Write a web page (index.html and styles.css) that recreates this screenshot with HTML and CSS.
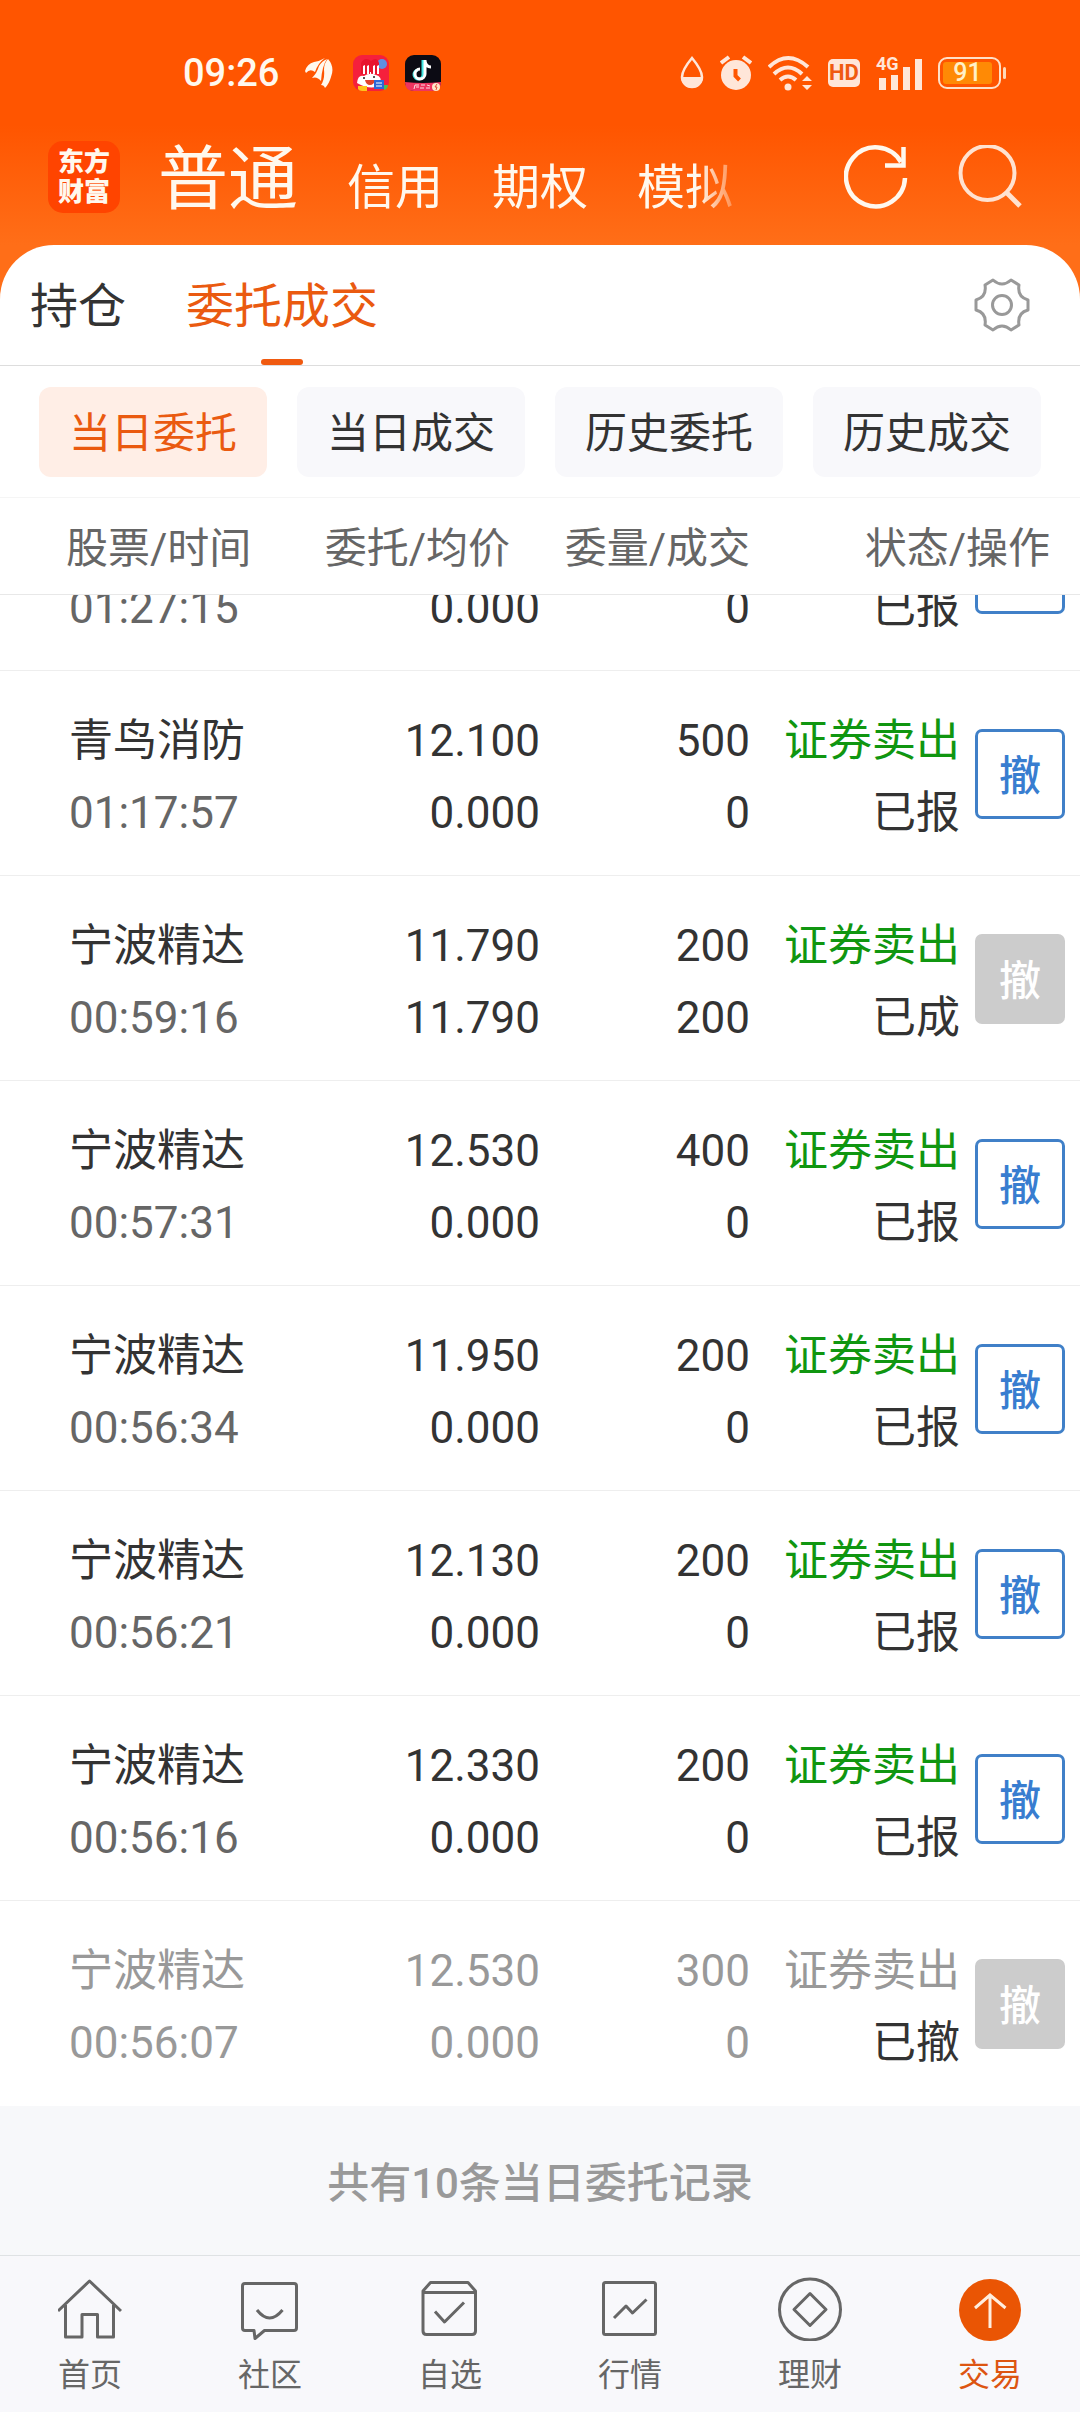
FILE: index.html
```html
<!DOCTYPE html>
<html lang="zh-CN">
<head>
<meta charset="utf-8">
<meta name="viewport" content="width=device-width, initial-scale=1">
<title>委托成交</title>
<link rel="stylesheet" href="styles.css">
</head>
<body>
<div class="app">
  <header class="top">
    <div class="status-bar">
      <div class="status-left">
        <span class="clock">09:26</span>
        <svg class="ico-brand" width="28" height="32" viewBox="0 0 28 32" aria-hidden="true">
          <path d="M0 14Q2 7 9 5Q15 4 20 1Q13 6 10 15Q5 11 1 16ZM7 21Q12 16 14 9Q17 4 22 2Q17 9 16 24Q12 19 7 21ZM16 28Q20 22 19 13Q19 6 23 2Q30 10 26 20Q24 27 20 31Q19 28 16 28Z" fill="#fff8ee"/>
        </svg>
        <svg class="ico-app" width="36" height="36" viewBox="0 0 36 36" aria-hidden="true">
          <rect width="36" height="36" rx="9" fill="#f5203c"/>
          <circle cx="29" cy="9" r="5" fill="#5d8fe0"/>
          <path d="M8 19V8Q12 1 18 6Q24 1 26 8V19Z" fill="#e8142e"/>
          <path d="M10 11l2-1v9h-2zM14 11l2-1v9h-2zM17 17h1v2h-1zM20 11l2-1v9h-2zM24 11l2-1v9h-2z" fill="#fff"/>
          <path d="M4 28Q5 19 11 21Q17 17 23 20Q29 21 28 30Q18 36 4 28Z" fill="#fff"/>
          <path d="M12 25h10q-1 5-5 5t-5-5z" fill="#e0402c"/>
          <circle cx="11" cy="23" r="1" fill="#222"/><circle cx="21" cy="22" r="1" fill="#222"/>
          <path d="M5 31h9v5H9q-3 0-4-2z" fill="#ffc21c"/>
          <rect x="21" y="25" width="10" height="9" fill="#2c66d8"/>
          <path d="M23 28h6M23 31h6" stroke="#fff"/>
          <path d="M31 30h4q0 4-4 5z" fill="#4fbf52"/>
        </svg>
        <svg class="ico-app" width="36" height="36" viewBox="0 0 36 36" aria-hidden="true">
          <rect width="36" height="36" rx="9" fill="#0c0b14"/>
          <path d="M18 5v14a4.500 4.500 0 1 1-5-4" fill="none" stroke="#3fe5e2" stroke-width="3"/>
          <path d="M20 5v14a5 5 0 1 1-5-5M20 6q1 6 6 6" fill="none" stroke="#fff" stroke-width="3"/>
          <path d="M0 27Q18 29 36 27Q36 36 27 36H9Q0 36 0 27Z" fill="#ef3460"/>
          <path d="M9 34l1-4h4M11 32h3M16 30h4M15 33h4M22 30l3 1M21 33h4" stroke="#ffdbe2" fill="none"/>
          <circle cx="31" cy="32" r="4" fill="#ffe7c8"/><path d="M32 29l-2 3h2l-1 3" stroke="#e34b38" fill="none"/>
        </svg>
      </div>
      <div class="status-right">
        <svg width="24" height="36" viewBox="0 0 24 36" aria-hidden="true">
          <path d="M12 3Q2 15 2 22a10 10 0 0 0 20 0Q22 15 12 3Z" fill="none" stroke="#ffe6d9" stroke-width="2.500"/>
          <path d="M1 22h22a11 11 0 0 1-22 0Z" fill="#ffe6d9"/>
        </svg>
        <svg width="32" height="36" viewBox="0 0 32 36" aria-hidden="true">
          <circle cx="16" cy="20" r="15" fill="#ffe6d9"/>
          <path d="M1 8l8-6M31 8l-8-6" stroke="#ffe6d9" stroke-width="4"/>
          <path d="M15.500 14v7l4 4" fill="none" stroke="#ff5500" stroke-width="4"/>
        </svg>
        <svg width="44" height="36" viewBox="0 0 44 36" aria-hidden="true">
          <path d="M1 12Q20 -6 40 12M6 19Q20 6 34 19M12 25Q20 18 28 25" fill="none" stroke="#ffe6d9" stroke-width="4"/>
          <circle cx="20" cy="32" r="3.500" fill="#ffe6d9"/>
          <path d="M34 26l5-5 5 5zM34 30l5 5 5-5z" fill="#ffe6d9"/>
        </svg>
        <span class="hd">HD</span>
        <span class="signal">
          <svg width="46" height="34" viewBox="0 0 46 34" aria-hidden="true">
            <path d="M3 22h7v12H3zM15 19h7v15h-7zM27 11h7v23h-7zM39 3h7v31h-7z" fill="#ffe6d9"/>
          </svg>
          <span class="net">4G</span>
        </span>
        <span class="battery"><span class="level">91</span></span>
      </div>
    </div>
    <div class="toolbar">
      <a class="logo" href="#home">东方<br>财富</a>
      <nav class="accounts" aria-label="账户">
        <a class="account current" href="#normal">普通</a>
        <a class="account" href="#credit">信用</a>
        <a class="account" href="#option">期权</a>
        <a class="account" href="#demo">模拟</a>
      </nav>
      <div class="tools">
        <button class="tool" type="button" aria-label="刷新">
          <svg width="64" height="64" viewBox="0 0 64 64"><path d="M61 33A29.500 29.500 0 1 1 57 17" fill="none" stroke="#fff8ee" stroke-width="4.500"/><path d="M59.500 2V20.500H41" fill="none" stroke="#fff8ee" stroke-width="4.500"/></svg>
        </button>
        <button class="tool" type="button" aria-label="搜索">
          <svg width="64" height="64" viewBox="0 0 64 64"><circle cx="29.500" cy="28" r="27" fill="none" stroke="#ffe2d0" stroke-width="4"/><path d="M48 47l14 14" stroke="#ffe2d0" stroke-width="5"/></svg>
        </button>
      </div>
    </div>
  </header>

  <main class="sheet">
    <div class="tabs">
      <a class="tab" href="#positions">持仓</a>
      <a class="tab active" href="#orders">委托成交</a>
      <button class="settings" type="button" aria-label="设置">
        <svg width="56" height="56" viewBox="0 0 56 56"><path d="M19 3Q28 11 37 3L45 8Q43 20 54 23V33Q43 36 45 48L37 53Q28 45 19 53L11 48Q13 36 2 33V23Q13 20 11 8Z" fill="none" stroke="#999" stroke-width="3" stroke-linejoin="round"/><circle cx="28" cy="28" r="9.500" fill="none" stroke="#999" stroke-width="3"/></svg>
      </button>
    </div>
    <div class="filters">
      <button class="chip selected" type="button">当日委托</button>
      <button class="chip" type="button">当日成交</button>
      <button class="chip" type="button">历史委托</button>
      <button class="chip" type="button">历史成交</button>
    </div>
    <div class="scroller">
      <div class="list">
        <table class="orders">
          <colgroup><col><col class="c-price"><col class="c-qty"><col class="c-state"><col class="c-act"></colgroup>
          <thead>
            <tr><th class="name">股票/时间</th><th class="price">委托/均价</th><th>委量/成交</th><th class="state" colspan="2">状态/操作</th></tr>
          </thead>
          <tbody>
            <tr>
              <td class="name"><span class="time">01:27:15</span></td>
              <td><span>0.000</span></td><td><span>0</span></td><td><span>已报</span></td>
              <td class="act"><button class="cancel" type="button" aria-label="撤"></button></td>
            </tr>
            <tr>
              <td class="name"><span>青鸟消防</span><span class="time">01:17:57</span></td>
              <td><span>12.100</span><span>0.000</span></td><td><span>500</span><span>0</span></td>
              <td><span class="sell">证券卖出</span><span>已报</span></td>
              <td class="act"><button class="cancel" type="button">撤</button></td>
            </tr>
            <tr>
              <td class="name"><span>宁波精达</span><span class="time">00:59:16</span></td>
              <td><span>11.790</span><span>11.790</span></td><td><span>200</span><span>200</span></td>
              <td><span class="sell">证券卖出</span><span>已成</span></td>
              <td class="act"><button class="cancel" type="button" disabled>撤</button></td>
            </tr>
            <tr>
              <td class="name"><span>宁波精达</span><span class="time">00:57:31</span></td>
              <td><span>12.530</span><span>0.000</span></td><td><span>400</span><span>0</span></td>
              <td><span class="sell">证券卖出</span><span>已报</span></td>
              <td class="act"><button class="cancel" type="button">撤</button></td>
            </tr>
            <tr>
              <td class="name"><span>宁波精达</span><span class="time">00:56:34</span></td>
              <td><span>11.950</span><span>0.000</span></td><td><span>200</span><span>0</span></td>
              <td><span class="sell">证券卖出</span><span>已报</span></td>
              <td class="act"><button class="cancel" type="button">撤</button></td>
            </tr>
            <tr>
              <td class="name"><span>宁波精达</span><span class="time">00:56:21</span></td>
              <td><span>12.130</span><span>0.000</span></td><td><span>200</span><span>0</span></td>
              <td><span class="sell">证券卖出</span><span>已报</span></td>
              <td class="act"><button class="cancel" type="button">撤</button></td>
            </tr>
            <tr>
              <td class="name"><span>宁波精达</span><span class="time">00:56:16</span></td>
              <td><span>12.330</span><span>0.000</span></td><td><span>200</span><span>0</span></td>
              <td><span class="sell">证券卖出</span><span>已报</span></td>
              <td class="act"><button class="cancel" type="button">撤</button></td>
            </tr>
            <tr class="void">
              <td class="name"><span>宁波精达</span><span class="time">00:56:07</span></td>
              <td><span>12.530</span><span>0.000</span></td><td><span>300</span><span>0</span></td>
              <td><span class="sell">证券卖出</span><span class="result">已撤</span></td>
              <td class="act"><button class="cancel" type="button" disabled>撤</button></td>
            </tr>
          </tbody>
        </table>
        <p class="total">共有10条当日委托记录</p>
      </div>
    </div>
  </main>

  <nav class="bottom-nav" aria-label="主导航">
    <a class="nav-item" href="#home">
      <svg class="nav-icon" viewBox="0 0 64 64"><path d="M0 34L31.500 4L63 34M7.500 28V60H24V37.500H39.500V60H55.500V28"/></svg>首页</a>
    <a class="nav-item" href="#community">
      <svg class="nav-icon" viewBox="0 0 64 64"><path d="M7 6.500H56Q58.500 6.500 58.500 9V51Q58.500 53.500 56 53.500H26.500L17 61.500L16 53.500H7Q4.500 53.500 4.500 51V9Q4.500 6.500 7 6.500ZM19 33Q31.500 49 44.500 33"/></svg>社区</a>
    <a class="nav-item" href="#watchlist">
      <svg class="nav-icon" viewBox="0 0 64 64"><path d="M5 14L12.500 5.500H50L57.500 14V54Q57.500 57.500 54 57.500H8.500Q5 57.500 5 54ZM5 15.500H57.500M17 34.500L26.500 45L46 25.500"/></svg>自选</a>
    <a class="nav-item" href="#market">
      <svg class="nav-icon" viewBox="0 0 64 64"><rect x="5.500" y="5.500" width="52" height="52" rx="2"/><path d="M16 41L28 29L34.500 36L48.500 22.500"/></svg>行情</a>
    <a class="nav-item" href="#wealth">
      <svg class="nav-icon" viewBox="0 0 64 64"><circle cx="32" cy="32.500" r="30.500"/><path d="M32 16.500L48 32.500L32 48.500L16 32.500Z"/></svg>理财</a>
    <a class="nav-item active" href="#trade">
      <svg class="nav-icon" viewBox="0 0 64 64"><circle class="disc" cx="32" cy="33" r="31"/><path class="arrow" d="M32 51V18M17 31L32 18L47.500 31"/></svg>交易</a>
  </nav>
</div>
</body>
</html>
```
FILE: styles.css
```css
* {
  box-sizing: border-box;
}

body {
  margin: 0;
  color: #333;
  background: #f8f8fb;
  font-family: Roboto, "Noto Sans CJK SC", sans-serif;
}

a {
  color: inherit;
  text-decoration: none;
}

button {
  padding: 0;
  border: 0;
  background: none;
  color: inherit;
  font: inherit;
}

svg {
  display: block;
}

.app {
  display: flex;
  flex-direction: column;
  height: 100vh;
  background: linear-gradient(#ff5500 125px, #ff6e18 245px);
}

.top {
  flex: none;
}

/* Status bar */
.status-bar {
  display: flex;
  align-items: center;
  justify-content: space-between;
  height: 94px;
  padding: 52px 74px 0 183px;
}

.status-left,
.status-right {
  display: flex;
  align-items: center;
}

.clock {
  color: #fff8ee;
  font-size: 38px;
  font-weight: 500;
  line-height: 42px;
}

.ico-brand {
  margin-left: 26px;
}

.ico-app {
  margin-left: 16px;
}

.ico-brand + .ico-app {
  margin-left: 20px;
}

.status-right {
  gap: 16px;
}

.hd {
  width: 32px;
  border-radius: 5px;
  background: #ffe6d9;
  color: #f05a10;
  font-size: 22px;
  font-weight: 700;
  line-height: 28px;
  text-align: center;
}

.signal {
  position: relative;
}

.net {
  position: absolute;
  top: -2px;
  left: 0;
  color: #ffe6d9;
  font-size: 18px;
  font-weight: 700;
  line-height: 20px;
}

.battery {
  position: relative;
  width: 63px;
  height: 32px;
  margin-right: 5px;
  padding: 3px;
  border: 2px solid #ffe0c8;
  border-radius: 9px;
}

.battery::after {
  content: "";
  position: absolute;
  top: 8px;
  right: -7px;
  width: 3px;
  height: 12px;
  border-radius: 2px;
  background: #ffd9b8;
}

.level {
  display: block;
  width: 49px;
  border-radius: 3px;
  background: #ff8a05;
  color: #fff0c8;
  font-size: 25px;
  font-weight: 500;
  line-height: 22px;
  text-align: center;
}

/* Account switcher */
.toolbar {
  display: flex;
  align-items: center;
  height: 151px;
  padding: 15px 58px 0 48px;
}

.logo {
  flex: none;
  width: 72px;
  padding: 6px 0;
  border-radius: 15px;
  background: #ff4400;
  color: #fff8ee;
  font-size: 26px;
  font-weight: 900;
  line-height: 30px;
  text-align: center;
}

.accounts {
  display: flex;
  align-items: baseline;
  gap: 49px;
  margin-left: 38px;
  padding-top: 14px;
  color: #fff8ee;
  -webkit-mask-image: linear-gradient(to right, #000 540px, transparent 590px);
  mask-image: linear-gradient(to right, #000 540px, transparent 590px);
}

.account {
  font-size: 48px;
  line-height: 80px;
  white-space: nowrap;
}

.account.current {
  font-size: 70px;
}

.tools {
  display: flex;
  gap: 50px;
  margin-left: auto;
}

/* Sheet */
.sheet {
  display: flex;
  flex: 1;
  flex-direction: column;
  min-height: 0;
  border-radius: 54px 54px 0 0;
  background: #fff;
}

.tabs {
  display: flex;
  align-items: center;
  gap: 60px;
  padding: 0 50px 0 30px;
  border-bottom: 1px solid #ddd;
}

.tab {
  position: relative;
  padding-top: 4px;
  font-size: 48px;
  line-height: 116px;
}

.tab.active {
  color: #ea5a10;
}

.tab.active::after {
  content: "";
  position: absolute;
  bottom: 0;
  left: calc(50% - 21px);
  width: 42px;
  height: 6px;
  border-radius: 3px;
  background: #f05a10;
}

.settings {
  margin-left: auto;
}

.filters {
  display: grid;
  grid-template-columns: repeat(4, 1fr);
  gap: 30px;
  padding: 21px 39px 20px;
  border-bottom: 1px solid #f5f5f5;
}

.chip {
  padding-top: 4px;
  border-radius: 12px;
  background: #f8f8fb;
  font-size: 42px;
  line-height: 86px;
}

.chip.selected {
  background: #ffeee6;
  color: #ea5a10;
}

/* The list opens scrolled to its last record */
.scroller {
  display: flex;
  flex: 1;
  flex-direction: column-reverse;
  min-height: 0;
  overflow-y: auto;
  scrollbar-width: none;
}

.list {
  flex: none;
}

.orders {
  width: 100%;
  border-spacing: 0;
  table-layout: fixed;
}

.c-price {
  width: 240px;
}

.c-qty,
.c-state {
  width: 210px;
}

.c-act {
  width: 120px;
}

thead {
  position: sticky;
  z-index: 1;
  top: 0;
  background: #fff;
}

th {
  padding: 6px 0 0;
  border-bottom: 1px solid #e8e8e8;
  color: #666;
  font-size: 42px;
  font-weight: 400;
  line-height: 90px;
  text-align: right;
  white-space: nowrap;
}

th.name {
  padding-left: 66px;
  text-align: left;
}

th.price,
th.state {
  padding-right: 30px;
}

td {
  height: 205px;
  padding: 34px 0 26px;
  border-bottom: 1px solid #eee;
  font-size: 44px;
  line-height: 72px;
  text-align: right;
  vertical-align: bottom;
  white-space: nowrap;
}

td span {
  display: block;
}

td.name {
  padding-left: 69px;
  text-align: left;
}

td.act {
  padding: 2px 15px 0 0;
  vertical-align: middle;
}

.time {
  color: #666;
}

.sell {
  color: #109610;
}

.void span {
  color: #999;
}

.void .result {
  color: #333;
}

.cancel {
  display: block;
  width: 90px;
  height: 90px;
  margin-left: auto;
  padding-top: 6px;
  border: 3px solid #4080c8;
  border-radius: 7px;
  color: #387dd0;
  font-size: 42px;
  font-weight: 500;
  line-height: 78px;
}

.cancel:disabled {
  border-color: #ccc;
  background: #ccc;
  color: #fff;
}

.orders tr:last-child td {
  border-bottom-color: #fff;
}

thead tr:last-child th {
  border-bottom-color: #e8e8e8;
}

.total {
  margin: 0;
  padding: 6px 0 0;
  background: #f7f8fa;
  color: #999;
  font-size: 42px;
  font-weight: 500;
  line-height: 143px;
  text-align: center;
}

/* Bottom navigation */
.bottom-nav {
  display: grid;
  grid-template-columns: repeat(6, 1fr);
  padding: 21px 0 17px;
  border-top: 1px solid #dfe2e4;
  background: #f8f8fb;
}

.nav-item {
  display: flex;
  flex-direction: column;
  align-items: center;
  gap: 14px;
  color: #666;
  font-size: 32px;
  line-height: 40px;
}

.nav-item.active {
  color: #dd5511;
}

.nav-icon {
  width: 64px;
  height: 64px;
  fill: none;
  stroke: #666;
  stroke-width: 3;
  stroke-linejoin: round;
}

.nav-icon .disc {
  fill: #ea5504;
  stroke: none;
}

.nav-icon .arrow {
  stroke: #ffeede;
  stroke-linejoin: miter;
}
```
